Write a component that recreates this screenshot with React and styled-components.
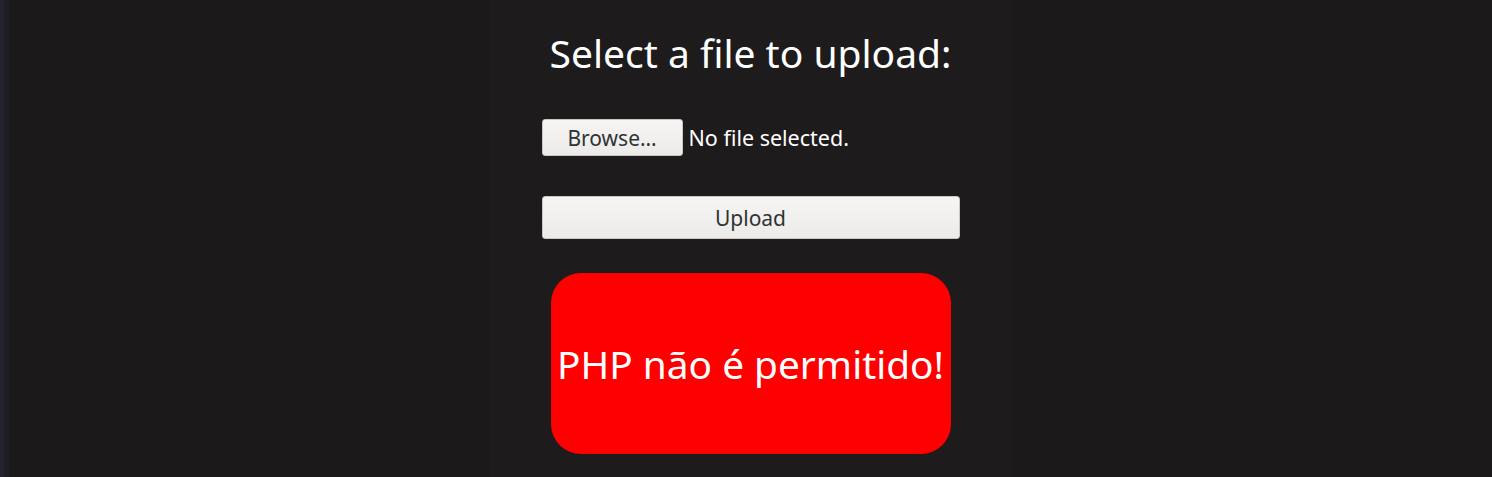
import React from "react";
import styled, { createGlobalStyle } from "styled-components";

const GlobalStyle = createGlobalStyle`
  html, body {
    margin: 0;
    padding: 0;
    height: 100%;
    background: #1b191a;
    font-family: "Noto Sans", "Open Sans", sans-serif;
  }
  #root {
    height: 100%;
  }
`;

export default function App() {
  return (
    <>
      <GlobalStyle />
      <StyledPage>
        <StyledEdge />
        <StyledMain>
          <StyledColumn>
            <StyledTitle>Select a file to upload:</StyledTitle>
            <StyledForm onSubmit={(e) => e.preventDefault()}>
              <StyledFileRow>
                <StyledBrowse type="button">Browse…</StyledBrowse>
                <StyledFileName>No file selected.</StyledFileName>
              </StyledFileRow>
              <StyledUpload type="submit">Upload</StyledUpload>
            </StyledForm>
            <StyledAlert>PHP não é permitido!</StyledAlert>
          </StyledColumn>
        </StyledMain>
      </StyledPage>
    </>
  );
}

const StyledPage = styled.div`
  display: flex;
  height: 477px;
  overflow: hidden;
`;

const StyledEdge = styled.div`
  width: 9px;
  flex: none;
  background: linear-gradient(to right, #24232d 0 4px, #1e1d25 4px 9px);
`;

const StyledMain = styled.div`
  flex: 1;
  display: flex;
  justify-content: center;
`;

const StyledColumn = styled.div`
  width: 522px;
  background: #1d1b1c;
  display: flex;
  flex-direction: column;
  align-items: center;
`;

const StyledTitle = styled.h1`
  margin: 26px 0 0;
  font-size: 39px;
  font-weight: 400;
  color: #ffffff;
  line-height: 54px;
`;

const StyledForm = styled.form`
  width: 418px;
  display: flex;
  flex-direction: column;
  margin-top: 39px;
`;

const StyledFileRow = styled.div`
  display: flex;
  align-items: center;
  gap: 6px;
`;

const StyledButton = styled.button`
  font-family: inherit;
  font-size: 21px;
  color: #2e3436;
  background: linear-gradient(to bottom, #f6f5f4, #edebe9);
  border: 1px solid #cdc7c2;
  border-radius: 3px;
  padding: 0;
  cursor: pointer;
`;

const StyledBrowse = styled(StyledButton)`
  width: 141px;
  height: 37px;
`;

const StyledFileName = styled.span`
  font-size: 21.5px;
  color: #ffffff;
`;

const StyledUpload = styled(StyledButton)`
  width: 418px;
  height: 43px;
  margin-top: 40px;
`;

const StyledAlert = styled.div`
  margin-top: 34px;
  width: 400px;
  height: 181px;
  border-radius: 30px;
  background: #ff0000;
  color: #ffffff;
  font-size: 38.8px;
  display: flex;
  align-items: center;
  justify-content: center;
`;
